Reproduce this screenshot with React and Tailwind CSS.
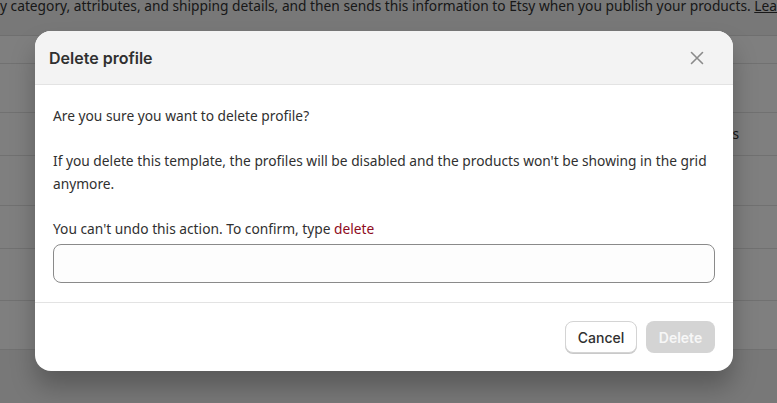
import React from 'react';

const font = { fontFamily: '"Noto Sans", "Open Sans", sans-serif' };

const CloseIcon = () => (
    <svg width="14" height="14" viewBox="0 0 14 14" fill="none" stroke="#8a8a8a" strokeWidth="1.6" strokeLinecap="round">
        <path d="M1.5 1.5l11 11M12.5 1.5l-11 11" />
    </svg>
);

const rows = [28, 49, 43, 50, 43, 52, 49];

const App = () => {
    return (
        <div className="relative w-[777px] h-[403px] overflow-hidden bg-[#f1f1f1] font-['Noto_Sans',sans-serif]">
            {/* page underneath */}
            <div className="h-[35px] overflow-hidden">
                <div className="-mt-[4px] whitespace-nowrap text-[13.75px] text-[#303030] leading-[20px]">
                    y category, attributes, and shipping details, and then sends this information to Etsy when you publish your products. <span className="underline">Learn more</span>
                </div>
            </div>
            <div className="border-t border-[#dedede] bg-white">
                {rows.map((h, i) => (
                    <div key={i} className="border-b border-[#e3e3e3] flex items-center justify-end pr-[38px] text-[13.75px] text-[#303030]" style={{ height: h }}>
                        {i === 2 ? 's' : ''}
                    </div>
                ))}
            </div>

            {/* overlay */}
            <div className="absolute inset-0 bg-black/50" />

            {/* modal */}
            <div className="absolute left-[35px] top-[31px] w-[698px] rounded-2xl bg-white overflow-hidden shadow-[0_16px_24px_rgba(0,0,0,0.25)]" style={font}>
                <div className="h-[54px] bg-[#f3f3f3] border-b border-[#e3e3e3] flex items-center justify-between pl-[14px] pr-[29px]">
                    <h2 className="text-[16px] font-semibold text-[#303030] font-['Inter',sans-serif]">Delete profile</h2>
                    <button className="flex items-center justify-center"><CloseIcon /></button>
                </div>
                <div className="px-[18px] pt-[19px] pb-[19px] text-[13.75px] leading-[23px] text-[#303030] space-y-[22px]">
                    <p>Are you sure you want to delete profile?</p>
                    <p>If you delete this template, the profiles will be disabled and the products won't be showing in the grid anymore.</p>
                    <div>
                        <p>You can't undo this action. To confirm, type <span className="text-[#8e0b21]">delete</span></p>
                        <input className="mt-[4px] w-full h-[39px] rounded-lg border border-[#8a8a8a] bg-[#fdfdfd] outline-none" />
                    </div>
                </div>
                <div className="border-t border-[#e3e3e3] flex justify-end gap-[9px] px-[18px] pt-[18px] pb-[18px]">
                    <button className="h-[32px] w-[72px] rounded-lg bg-white border border-[#d4d4d4] shadow-[0_1px_0_#c9c9c9] text-[14px] font-medium text-[#303030] font-['Inter',sans-serif]">Cancel</button>
                    <button className="h-[32px] w-[69px] rounded-lg bg-[#d4d4d4] text-[14px] font-semibold text-[#f7f7f7] font-['Inter',sans-serif]">Delete</button>
                </div>
            </div>
        </div>
    );
};

export default App;
